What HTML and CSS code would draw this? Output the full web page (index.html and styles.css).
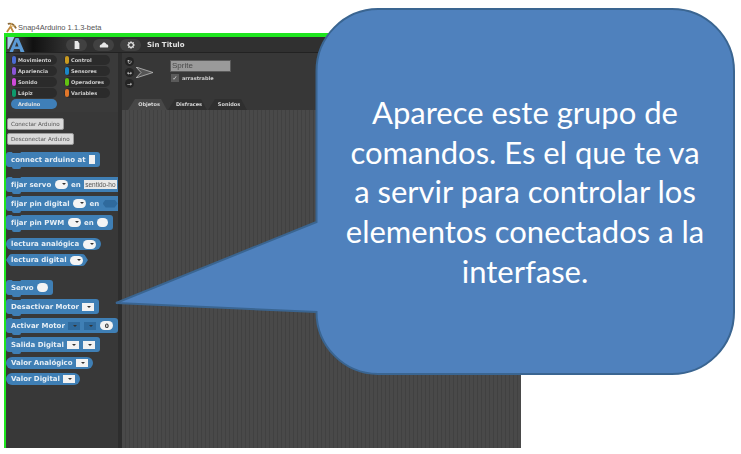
FILE: index.html
```html
<!DOCTYPE html>
<html lang="es">
<head>
  <meta charset="UTF-8" />
  <title>Snap4Arduino</title>
  <link rel="stylesheet" href="styles.css">
</head>
<body>
  <div class="titulo">
    <svg class="titulo-icono" viewBox="0 0 12 12"><path d="M1 11 L5 5 L8 11" fill="none" stroke="#c08a3e" stroke-width="2"/><path d="M2 2 C6 1 9 3 11 7" fill="none" stroke="#8a6a3a" stroke-width="2"/><path d="M6 1 L5 5 L10 4" fill="none" stroke="#e0b060" stroke-width="1"/></svg>
    <span>Snap4Arduino 1.1.3-beta</span>
  </div>

  <div class="ventana">
    <div class="barra">
      <div class="logo">
        <svg viewBox="0 0 20 15"><path d="M0 0 H7 L1 12 H0 Z" fill="#a9cbe8"/><path d="M2 15 L8 1 L11 1 L17 15 L13 15 L12 12 L6.500 12 L5.500 15 Z M7.500 9.500 H11 L9.300 5 Z" fill="#5b9bd5" fill-rule="evenodd"/></svg>
      </div>
      <button class="pildora">
        <svg viewBox="0 0 10 10"><path d="M2 0 H6 L8 3 V10 H2 Z" fill="#e8e8e8"/></svg>
      </button>
      <button class="pildora">
        <svg viewBox="0 0 12 10"><path d="M1 8 C0 5 2 4 3.500 4 C4 1 8 1 9 4 C11 4 12 6 11 8 Z" fill="#e8e8e8"/></svg>
      </button>
      <button class="pildora">
        <svg viewBox="0 0 10 10"><circle cx="5" cy="5" r="3" fill="none" stroke="#e8e8e8" stroke-width="1.500"/><path d="M5 0 V2 M5 8 V10 M0 5 H2 M8 5 H10 M1.500 1.500 L3 3 M7 7 L8.500 8.500 M1.500 8.500 L3 7 M7 3 L8.500 1.500" stroke="#e8e8e8"/></svg>
      </button>
      <span class="proyecto">Sin Titulo</span>
    </div>

    <div class="cuerpo">
      <aside class="paleta">
        <div class="categorias">
          <div class="cat"><i class="c-mov"></i>Movimiento</div>
          <div class="cat"><i class="c-con"></i>Control</div>
          <div class="cat"><i class="c-apa"></i>Apariencia</div>
          <div class="cat"><i class="c-sen"></i>Sensores</div>
          <div class="cat"><i class="c-son"></i>Sonido</div>
          <div class="cat"><i class="c-ope"></i>Operadores</div>
          <div class="cat"><i class="c-lap"></i>Lápiz</div>
          <div class="cat"><i class="c-var"></i>Variables</div>
          <div class="cat activa">Arduino</div>
        </div>

        <div class="bloques">
          <button class="boton">Conectar Arduino</button>
          <button class="boton segundo">Desconectar Arduino</button>

          <div class="bloque b-connect">connect arduino at <span class="campo-v"></span></div>
          <div class="bloque b-servo">fijar servo <span class="ovalo flecha"></span> en <span class="campo-t">sentido-ho</span></div>
          <div class="bloque">fijar pin digital <span class="ovalo flecha"></span> en <span class="hexa"></span></div>
          <div class="bloque">fijar pin PWM <span class="ovalo flecha"></span> en <span class="ovalo"></span></div>
          <div class="bloque redondo b-lectura">lectura analógica <span class="ovalo flecha"></span></div>
          <div class="bloque redondo hex">lectura digital <span class="ovalo flecha"></span></div>
          <div class="bloque b-motor">Servo <span class="ovalo"></span></div>
          <div class="bloque">Desactivar Motor <span class="menu"></span></div>
          <div class="bloque">Activar Motor <span class="menu azul"></span><span class="menu azul"></span><span class="ovalo num">0</span></div>
          <div class="bloque">Salida Digital <span class="menu"></span><span class="menu"></span></div>
          <div class="bloque redondo b-valor">Valor Analógico <span class="menu"></span></div>
          <div class="bloque redondo b-valor2">Valor Digital <span class="menu"></span></div>
        </div>
      </aside>

      <main class="escena">
        <div class="sprite">
          <div class="rotacion">
            <span class="redondel">↻</span>
            <span class="redondel">↔</span>
            <span class="redondel">→</span>
          </div>
          <svg class="flecha-sprite" viewBox="0 0 17 11"><path d="M0 0 L17 5.500 L0 11 L5 5.500 Z" fill="#555" stroke="#bbb" stroke-width="0.800"/></svg>
          <div class="sprite-datos">
            <div class="nombre">Sprite</div>
            <div class="arrastrable"><span class="check">✓</span>arrastrable</div>
          </div>
        </div>
        <div class="pestanas">
          <div class="pestana activa">Objetos</div>
          <div class="pestana">Disfraces</div>
          <div class="pestana">Sonidos</div>
        </div>
        <div class="rayas"></div>
      </main>
    </div>
  </div>

  <div class="globo">
    <svg class="globo-forma" viewBox="0 0 741 454">
      <path d="M378 9 H672 A62 62 0 0 1 734 71 V312 A62 62 0 0 1 672 374 H378 A62 62 0 0 1 316.500 312 L116 303 L316.500 222 V71 A62 62 0 0 1 378 9 Z" fill="#4f81bd" stroke="#3a6591" stroke-width="2"/>
    </svg>
    <p class="globo-texto">Aparece este grupo de<br>comandos. Es el que te va<br>a servir para controlar los<br>elementos conectados a la<br>interfase.</p>
  </div>
</body>
</html>
```

FILE: styles.css
```css
* {
  box-sizing: border-box;
}

body {
  margin: 0;
  width: 741px;
  height: 454px;
  background: #fff;
  font-family: "DejaVu Sans", sans-serif;
  overflow: hidden;
  position: relative;
}

.titulo {
  height: 33px;
  padding: 22px 0 0 6px;
  display: flex;
  align-items: flex-start;
  gap: 1px;
  font-family: "Liberation Sans", sans-serif;
  font-size: 7.500px;
  line-height: 11px;
  color: #555;
}

.titulo-icono {
  width: 11px;
  height: 11px;
}

.ventana {
  margin-left: 4px;
  width: 517px;
  height: 415px;
  border-top: 4px solid #1fe61f;
  border-left: 2px solid #1fe61f;
  background: #383838;
  display: flex;
  flex-direction: column;
  filter: blur(0.45px);
}

.barra {
  height: 16px;
  background: #303030;
  border-bottom: 1px solid #222;
  display: flex;
  align-items: center;
  flex-shrink: 0;
}

.logo {
  width: 60px;
  height: 15px;
  background: linear-gradient(to right, #3d3d3d 10%, #111 45%, #303030);
  padding-left: 1px;
}

.logo svg {
  width: 21px;
  height: 15px;
  display: block;
}

.pildora {
  width: 21px;
  height: 12px;
  padding: 2px 0;
  margin-right: 6px;
  border: none;
  border-radius: 6px;
  background: #414141;
  display: flex;
  justify-content: center;
}

.pildora svg {
  height: 8px;
  width: 10px;
}

.proyecto {
  font-size: 7px;
  font-weight: bold;
  color: #e4e4e4;
}

.cuerpo {
  flex: 1;
  display: flex;
  min-height: 0;
}

.paleta {
  width: 112px;
  flex-shrink: 0;
  display: flex;
  flex-direction: column;
  overflow: hidden;
}

.categorias {
  height: 59px;
  background: #3a3a3a;
  padding: 2px 5px 0;
  display: grid;
  grid-template-columns: 46px 46px;
  grid-auto-rows: 10px;
  column-gap: 7px;
  row-gap: 1px;
}

.cat {
  background: #2b2b2b;
  border-radius: 5px;
  font-size: 5px;
  font-weight: bold;
  line-height: 10px;
  color: #cfcfcf;
  display: flex;
  padding-left: 1px;
  white-space: nowrap;
}

.cat i {
  width: 4px;
  height: 8px;
  margin: 1px 2px 0 0;
  border-radius: 2px;
}

.cat.activa {
  background: #3f7fb8;
  padding-left: 7px;
  color: #e3e3e3;
}

.c-mov { background: #4a6cd4; }
.c-con { background: #c99a20; }
.c-apa { background: #8a55d7; }
.c-sen { background: #1a86c8; }
.c-son { background: #cf4ad9; }
.c-ope { background: #62c213; }
.c-lap { background: #0e9a6c; }
.c-var { background: #e0762a; }

.bloques {
  padding-top: 6px;
  display: flex;
  flex-direction: column;
  align-items: flex-start;
}

.boton {
  height: 12px;
  padding: 0 3px;
  margin-left: 1px;
  border: 1px solid #999;
  border-radius: 2px;
  background: #d9d9d9;
  color: #555;
  font-family: "DejaVu Sans", sans-serif;
  font-size: 5.600px;
  line-height: 9px;
  white-space: nowrap;
}

.boton.segundo {
  margin-top: 3px;
}

.bloque {
  flex-shrink: 0;
  height: 15px;
  margin-top: 4px;
  padding: 0 5px;
  background: #3f7fb5;
  border-radius: 3px;
  color: #e6eef5;
  font-size: 7px;
  font-weight: bold;
  display: flex;
  align-items: center;
  gap: 1px;
  white-space: pre;
  position: relative;
}

/* muesca de encaje de los bloques de comando */
.bloque:not(.redondo)::before,
.bloque:not(.redondo)::after {
  content: "";
  position: absolute;
  left: 6px;
  width: 9px;
  height: 2px;
  border-radius: 0 0 2px 2px;
}

.bloque:not(.redondo)::before {
  top: 0;
  height: 1px;
  background: #383838;
}

.bloque:not(.redondo)::after {
  bottom: -2px;
  background: #3f7fb5;
}

.b-connect {
  margin-top: 7px;
}

.b-servo {
  margin-top: 10px;
}

.b-lectura {
  margin-top: 8px;
}

.b-motor {
  margin-top: 14px;
}

.b-valor {
  margin-top: 5px;
}

.b-valor2 {
  margin-top: 4px;
}

.redondo {
  height: 12px;
  border-radius: 6px;
}

.hex {
  margin-top: 4px;
  clip-path: polygon(4px 0, calc(100% - 4px) 0, 100% 50%, calc(100% - 4px) 100%, 4px 100%, 0 50%);
}

.campo-v {
  width: 6px;
  height: 9px;
  background: #f2f2f2;
}

.campo-t {
  background: #e8e8e8;
  color: #555;
  font-family: "Liberation Sans", sans-serif;
  font-size: 6.500px;
  font-weight: normal;
  line-height: 9px;
  padding: 0 1px;
}

.ovalo {
  width: 11px;
  height: 9px;
  border-radius: 5px;
  background: #f4f4f4;
  flex-shrink: 0;
}

.ovalo.flecha {
  width: 13px;
  background: #f4f4f4;
  position: relative;
}

.flecha::after {
  content: "";
  position: absolute;
  right: 2px;
  top: 3px;
  border: 2.500px solid transparent;
  border-top-color: #333;
}

.ovalo.num {
  width: 13px;
  margin-left: 3px;
  color: #333;
  font-size: 6px;
  line-height: 9px;
  text-align: center;
}

.hexa {
  width: 15px;
  height: 8px;
  background: #2f6a9d;
  clip-path: polygon(3px 0, calc(100% - 3px) 0, 100% 50%, calc(100% - 3px) 100%, 3px 100%, 0 50%);
}

.menu {
  width: 12px;
  height: 8px;
  background: #f2f2f2;
  flex-shrink: 0;
  position: relative;
}

.menu + .menu {
  margin-left: 3px;
}

.menu.azul {
  background: #2f6a9d;
}

.menu::after {
  content: "";
  position: absolute;
  right: 3px;
  top: 3px;
  border: 2px solid transparent;
  border-top-color: #333;
}

.escena {
  flex: 1;
  min-width: 0;
  border-left: 4px solid #2d2d2d;
  background: #373737;
  display: flex;
  flex-direction: column;
}

.sprite {
  height: 46px;
  padding: 4px 0 0 3px;
  display: flex;
  flex-shrink: 0;
}

.rotacion {
  display: flex;
  flex-direction: column;
  gap: 2px;
}

.redondel {
  width: 9px;
  height: 9px;
  border-radius: 50%;
  background: #242424;
  color: #ddd;
  font-size: 6px;
  line-height: 9px;
  text-align: center;
}

.flecha-sprite {
  width: 17px;
  height: 11px;
  margin: 10px 0 0 2px;
}

.sprite-datos {
  margin: 3px 0 0 17px;
}

.nombre {
  width: 61px;
  height: 12px;
  padding-left: 1px;
  background: #9a9a9a;
  border: 1px solid #5a5a5a;
  color: #4a4a4a;
  font-family: "Liberation Sans", sans-serif;
  font-size: 8px;
  line-height: 9px;
}

.arrastrable {
  margin-top: 2px;
  display: flex;
  align-items: center;
  gap: 3px;
  color: #d0d0d0;
  font-size: 5px;
  font-weight: bold;
}

.check {
  width: 8px;
  height: 8px;
  margin-left: 1px;
  background: #5a5a5a;
  color: #ddd;
  font-size: 6px;
  line-height: 8px;
  text-align: center;
}

.pestanas {
  height: 11px;
  padding-left: 6px;
  display: flex;
  gap: 1px;
  flex-shrink: 0;
}

.pestana {
  height: 11px;
  width: 39px;
  padding-left: 3px;
  background: #2f2f2f;
  color: #d8d8d8;
  font-size: 5px;
  font-weight: bold;
  line-height: 11px;
  text-align: center;
  white-space: nowrap;
  clip-path: polygon(0 100%, 7px 0, calc(100% - 6px) 0, 100% 100%);
}

.pestana.activa {
  background: #474747;
}

.rayas {
  flex: 1;
  background: repeating-linear-gradient(to right, #494949 0, #494949 3px, #414141 3px, #414141 4px);
}

.globo {
  position: absolute;
  left: 0;
  top: 0;
  width: 741px;
  height: 454px;
}

.globo-forma {
  position: absolute;
  left: 0;
  top: 0;
  width: 741px;
  height: 454px;
}

.globo-texto {
  position: absolute;
  left: 325px;
  top: 93px;
  width: 400px;
  margin: 0;
  color: #fff;
  font-family: Lato, sans-serif;
  font-size: 31px;
  line-height: 39.700px;
  text-align: center;
}
```
